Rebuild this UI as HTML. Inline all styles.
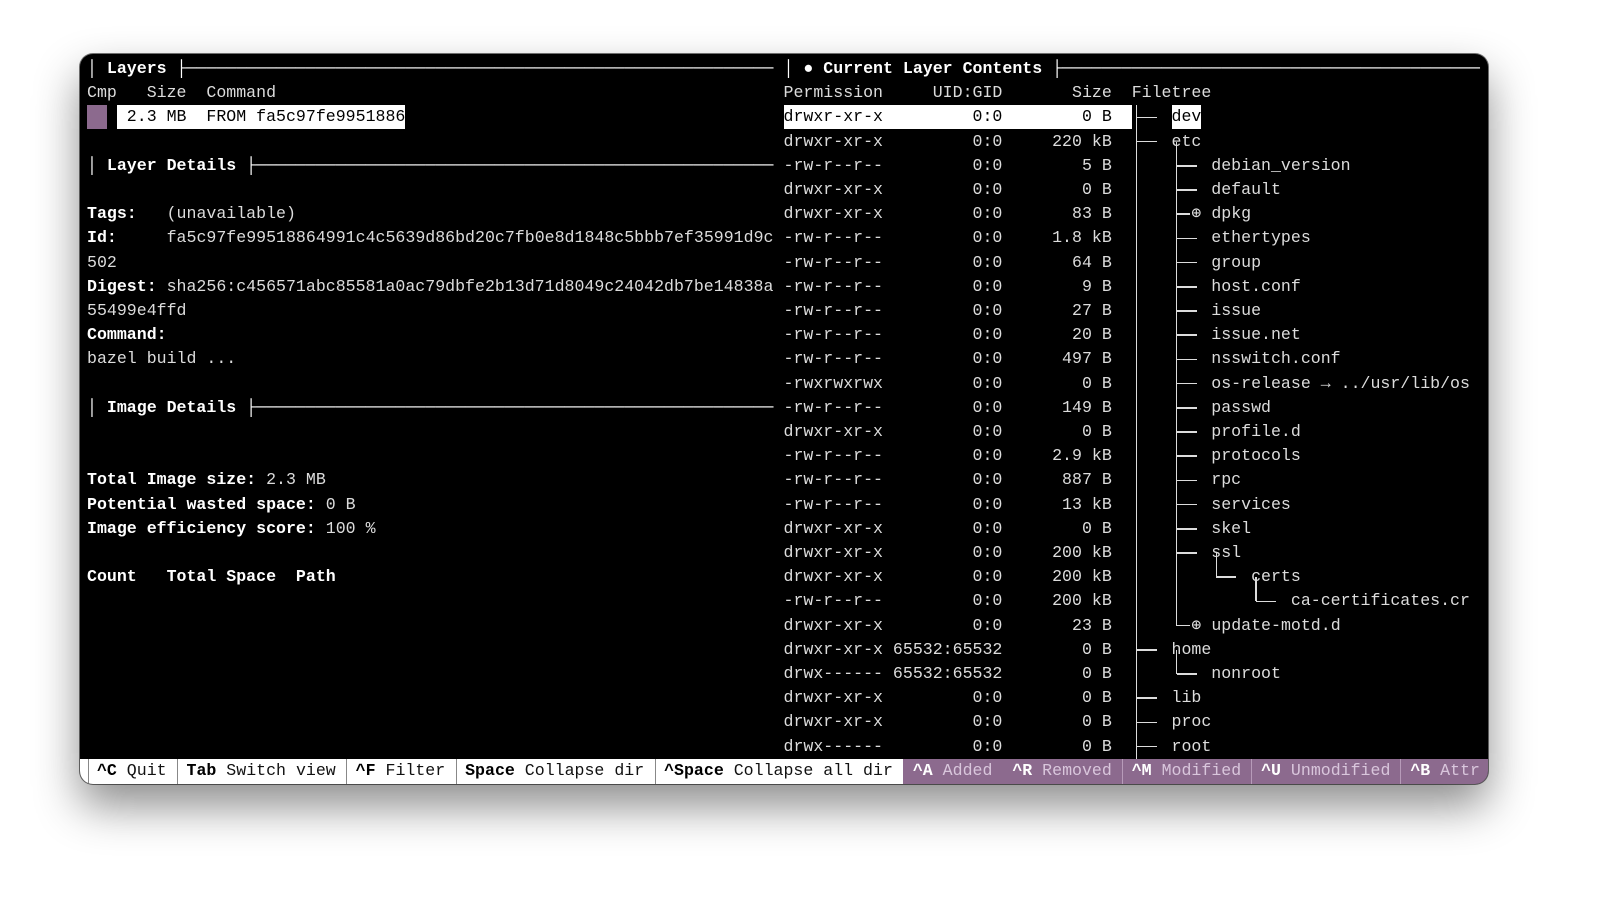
<!DOCTYPE html>
<html><head><meta charset="utf-8"><style>
html,body{margin:0;padding:0;background:#fff;width:1600px;height:909px;overflow:hidden}
.win{position:absolute;left:80px;top:54px;width:1408px;height:730px;background:#000;border-radius:13px;overflow:hidden;box-shadow:0 22px 45px rgba(0,0,0,.45),0 0 0 1px #777}
pre{position:absolute;margin:0;font-family:"Liberation Mono","DejaVu Sans Mono",monospace;font-size:16.58px;line-height:24.2px;color:#dcdcdc;white-space:pre}
b{color:#fff;font-weight:bold}
.hl{display:inline-block;background:#fff;color:#000;height:24.2px;vertical-align:top}
.pb{display:inline-block;background:#8c6a8e;height:24.2px;vertical-align:top}
.vl{position:absolute;width:1.6px;margin-left:-0.8px;background:#dcdcdc}
.h{position:absolute;height:1.6px;margin-top:-0.8px;width:20px;background:#dcdcdc}
.s{width:13.5px}
.sep{position:absolute;top:705px;width:1px;height:25px;background:#888}
.st{position:absolute;top:704.7px;height:25.3px}
.k{font-weight:bold;color:#000}
.pu{color:#d9c6dc}
.pu .k{color:#fff}
</style></head><body>
<div class="win">
<div class="st" style="left:0;width:823px;background:#fff"></div>
<div class="st" style="left:823px;width:585px;background:#8c6a8e"></div>
<div class="sep" style="left:8px"></div>
<div class="sep" style="left:97px"></div>
<div class="sep" style="left:266px"></div>
<div class="sep" style="left:376px"></div>
<div class="sep" style="left:575px"></div>
<div class="sep" style="left:1042px;background:#b79bb9"></div>
<div class="sep" style="left:1171px;background:#b79bb9"></div>
<div class="sep" style="left:1320px;background:#b79bb9"></div>

<div class="vl" style="left:1056.7px;top:51.3px;height:654px"></div>
<div class="vl" style="left:1096.5px;top:87.6px;height:484px"></div>
<div class="vl" style="left:1136.3px;top:499px;height:24.2px"></div>
<div class="vl" style="left:1176.1px;top:523.2px;height:24.2px"></div>
<div class="vl" style="left:1096.5px;top:595.8px;height:24.2px"></div>

<div class="h" style="left:1056.7px;top:63.4px"></div>
<div class="h" style="left:1056.7px;top:87.6px"></div>
<div class="h" style="left:1056.7px;top:595.8px"></div>
<div class="h" style="left:1056.7px;top:644.2px"></div>
<div class="h" style="left:1056.7px;top:668.4px"></div>
<div class="h" style="left:1056.7px;top:692.6px"></div>

<div class="h" style="left:1096.5px;top:111.8px"></div>
<div class="h" style="left:1096.5px;top:136px"></div>
<div class="h s" style="left:1096.5px;top:160.2px"></div>
<div class="h" style="left:1096.5px;top:184.4px"></div>
<div class="h" style="left:1096.5px;top:208.6px"></div>
<div class="h" style="left:1096.5px;top:232.8px"></div>
<div class="h" style="left:1096.5px;top:257px"></div>
<div class="h" style="left:1096.5px;top:281.2px"></div>
<div class="h" style="left:1096.5px;top:305.4px"></div>
<div class="h" style="left:1096.5px;top:329.6px"></div>
<div class="h" style="left:1096.5px;top:353.8px"></div>
<div class="h" style="left:1096.5px;top:378px"></div>
<div class="h" style="left:1096.5px;top:402.2px"></div>
<div class="h" style="left:1096.5px;top:426.4px"></div>
<div class="h" style="left:1096.5px;top:450.6px"></div>
<div class="h" style="left:1096.5px;top:474.8px"></div>
<div class="h" style="left:1096.5px;top:499px"></div>
<div class="h s" style="left:1096.5px;top:571.6px"></div>
<div class="h" style="left:1096.5px;top:620px"></div>
<div class="h" style="left:1136.3px;top:523.2px"></div>
<div class="h" style="left:1176.1px;top:547.4px"></div>

<pre style="left:7px;top:2.9px"><b>│ Layers ├───────────────────────────────────────────────────────────</b>
Cmp   Size  Command
<span class="pb">  </span> <span class="hl"> 2.3 MB  FROM fa5c97fe9951886</span>

<b>│ Layer Details ├────────────────────────────────────────────────────</b>

<b>Tags:</b>   (unavailable)
<b>Id:</b>     fa5c97fe99518864991c4c5639d86bd20c7fb0e8d1848c5bbb7ef35991d9c
502
<b>Digest:</b> sha256:c456571abc85581a0ac79dbfe2b13d71d8049c24042db7be14838a
55499e4ffd
<b>Command:</b>
bazel build ...

<b>│ Image Details ├────────────────────────────────────────────────────</b>


<b>Total Image size:</b> 2.3 MB
<b>Potential wasted space:</b> 0 B
<b>Image efficiency score:</b> 100 %

<b>Count   Total Space  Path</b>
</pre>
<pre style="left:703.5px;top:2.9px"><b>│ ● Current Layer Contents ├──────────────────────────────────────────</b>
Permission     UID:GID       Size  Filetree
<span class="hl">drwxr-xr-x         0:0        0 B  </span>    <span class="hl">dev</span>
drwxr-xr-x         0:0     220 kB      etc
-rw-r--r--         0:0        5 B          debian_version
drwxr-xr-x         0:0        0 B          default
drwxr-xr-x         0:0       83 B        ⊕ dpkg
-rw-r--r--         0:0     1.8 kB          ethertypes
-rw-r--r--         0:0       64 B          group
-rw-r--r--         0:0        9 B          host.conf
-rw-r--r--         0:0       27 B          issue
-rw-r--r--         0:0       20 B          issue.net
-rw-r--r--         0:0      497 B          nsswitch.conf
-rwxrwxrwx         0:0        0 B          os-release → ../usr/lib/os
-rw-r--r--         0:0      149 B          passwd
drwxr-xr-x         0:0        0 B          profile.d
-rw-r--r--         0:0     2.9 kB          protocols
-rw-r--r--         0:0      887 B          rpc
-rw-r--r--         0:0      13 kB          services
drwxr-xr-x         0:0        0 B          skel
drwxr-xr-x         0:0     200 kB          ssl
drwxr-xr-x         0:0     200 kB              certs
-rw-r--r--         0:0     200 kB                  ca-certificates.cr
drwxr-xr-x         0:0       23 B        ⊕ update-motd.d
drwxr-xr-x 65532:65532        0 B      home
drwx------ 65532:65532        0 B          nonroot
drwxr-xr-x         0:0        0 B      lib
drwxr-xr-x         0:0        0 B      proc
drwx------         0:0        0 B      root
</pre>
<pre style="left:7px;top:704.7px;color:#111"> <span class="k">^C</span> Quit  <span class="k">Tab</span> Switch view  <span class="k">^F</span> Filter  <span class="k">Space</span> Collapse dir  <span class="k">^Space</span> Collapse all dir <span class="pu"> <span class="k">^A</span> Added  <span class="k">^R</span> Removed  <span class="k">^M</span> Modified  <span class="k">^U</span> Unmodified  <span class="k">^B</span> Attr</span></pre>
</div>
</body></html>
